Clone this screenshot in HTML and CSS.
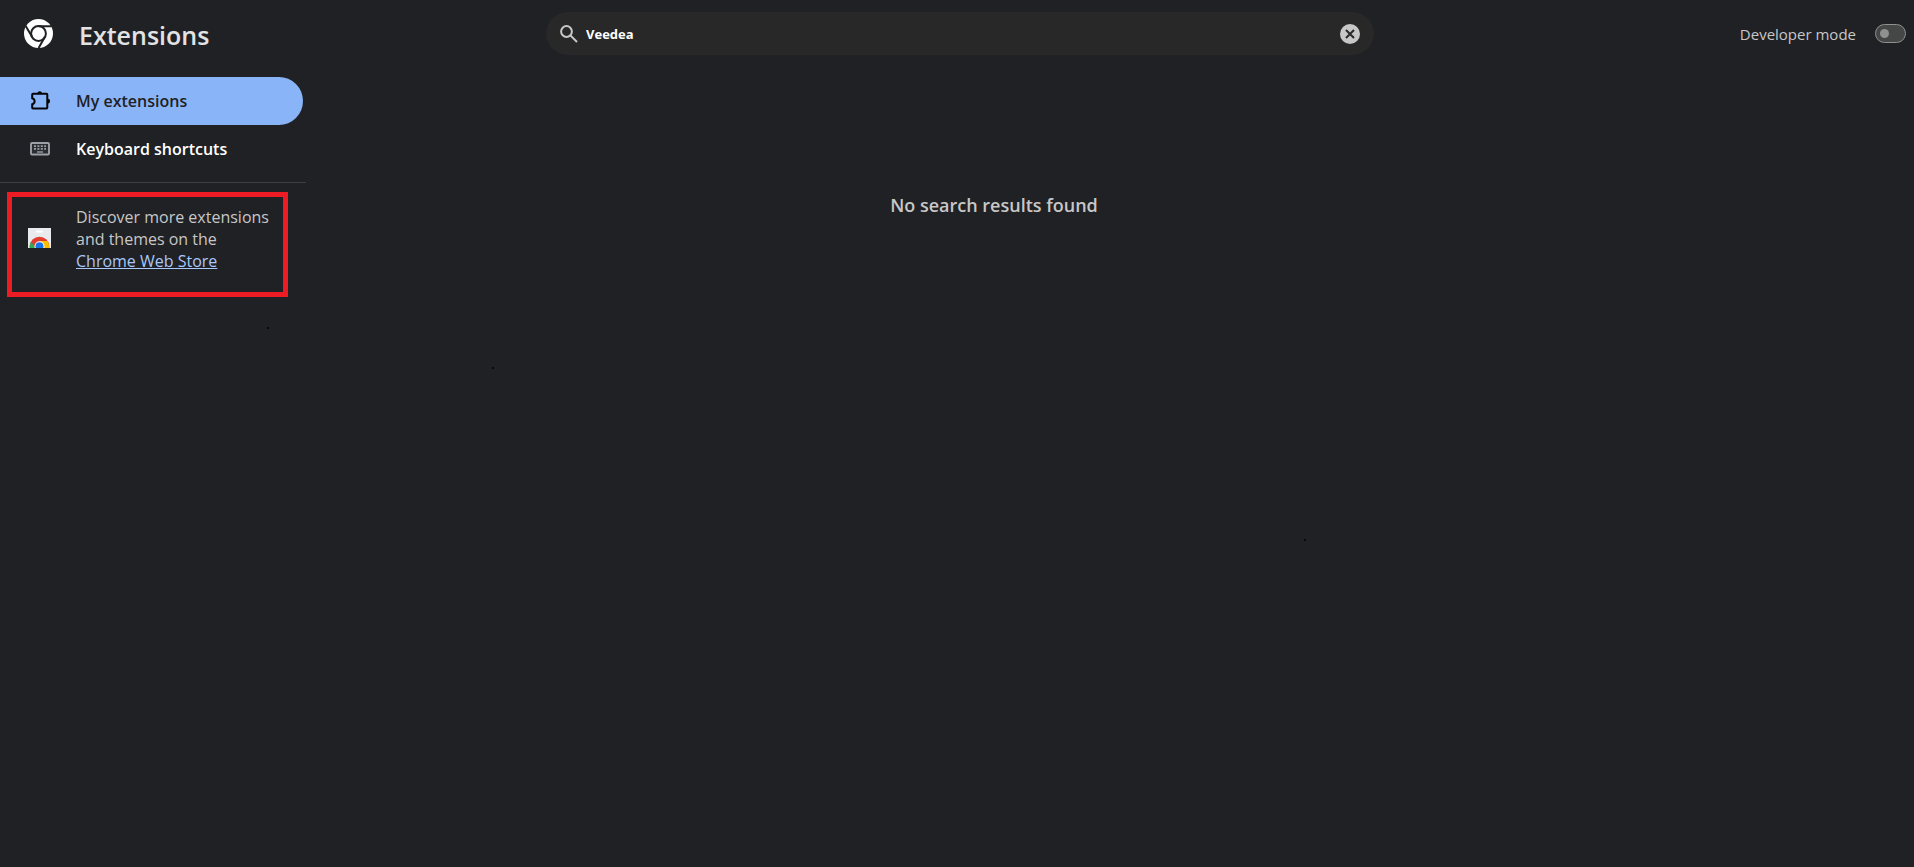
FILE: index.html
```html
<!DOCTYPE html>
<html lang="en">
<head>
<meta charset="utf-8">
<title>Extensions</title>
<link rel="stylesheet" href="styles.css">
</head>
<body>
<header class="toolbar">
  <div class="brand">
    <svg class="logo" viewBox="0 0 29 29" aria-hidden="true">
      <circle cx="14.5" cy="14.5" r="14.5" fill="#fff"/>
      <circle cx="14.5" cy="14.5" r="7.4" fill="none" stroke="#202124" stroke-width="2"/>
      <path d="M14.5 7.2H27.4M8.2 18.1L1.7 7M20.8 18.1L14.6 29" fill="none" stroke="#202124" stroke-width="2"/>
    </svg>
    <h1 class="title">Extensions</h1>
  </div>
  <div class="search">
    <svg class="search-icon" viewBox="0 0 18 18" aria-hidden="true"><circle cx="6.5" cy="6.5" r="5.4"/><path d="M10.5 10.5L17 17"/></svg>
    <input class="search-input" type="text" value="Veedea" aria-label="Search extensions">
    <button class="clear" type="button" aria-label="Clear search">
      <svg viewBox="0 0 20 20"><circle cx="10" cy="10" r="10" fill="#c7c7c7"/><path d="M6 6l8 8M14 6l-8 8" stroke="#282828" stroke-width="2"/></svg>
    </button>
  </div>
  <div class="dev">
    <label for="dev-mode">Developer mode</label>
    <input id="dev-mode" class="toggle" type="checkbox" role="switch">
  </div>
</header>
<div class="layout">
  <aside class="sidebar">
    <nav class="menu">
      <a class="item active" href="#extensions">
        <svg class="icon" viewBox="0 0 20 20" aria-hidden="true"><path d="M3 2.8H16.5Q17.3 2.8 17.3 3.6V16.7Q17.3 17.5 16.5 17.5H3Q2.2 17.5 2.2 16.7V13.2Q4.6 12.6 4.6 10.2T2.2 7.2V3.6Q2.2 2.8 3 2.8Z" fill="none" stroke="#050505" stroke-width="2"/><path d="M7.4 3a2.3 2.8 0 0 1 4.6 0zM17.4 7.8a2.6 2.4 0 0 1 0 4.8z" fill="#050505"/></svg>
        <span>My extensions</span>
      </a>
      <a class="item" href="#shortcuts">
        <svg class="icon" viewBox="0 0 20 20" aria-hidden="true"><rect x="1" y="4" width="18" height="11.5" rx="1" fill="#2b2d31" stroke="#9aa0a6" stroke-width="1.9"/><path d="M4 7.2h12M4 9.9h12" stroke="#9aa0a6" stroke-width="1.8" stroke-dasharray="2 1.4"/><path d="M7 13h6" stroke="#9aa0a6" stroke-width="1.4"/></svg>
        <span>Keyboard shortcuts</span>
      </a>
    </nav>
    <div class="promo">
      <svg class="store" viewBox="0 0 23 20" aria-hidden="true">
        <path d="M0 0h23v20H0z" fill="#e8eaed"/><rect x="8" y="2.5" width="7" height="2" rx="1" fill="#fff"/>
        <circle cx="11.5" cy="18.5" r="9.8" fill="#e33b2e"/>
        <path d="M3 13.5L8 20H1.8Q1.4 16.5 3 13.5Z" fill="#34a853"/>
        <path d="M11.5 13H19.6Q21.6 16 21.2 20H12Z" fill="#fbbc04"/>
        <circle cx="11.5" cy="18.3" r="5" fill="#fff"/><circle cx="11.5" cy="18.3" r="4" fill="#1a73e8"/>
      </svg>
      <p class="promo-text">Discover more extensions and themes on the <a href="#store">Chrome Web Store</a></p>
    </div>
  </aside>
  <main class="results"><p class="empty">No search results found</p></main>
</div>
<i class="speck speck-a"></i><i class="speck speck-b"></i><i class="speck speck-c"></i>
</body>
</html>
```
FILE: styles.css
```css
* { box-sizing: border-box; }
body {
  position: relative;
  margin: 0;
  min-height: 100vh;
  background: #202124;
  color: #c7c7c7;
  font: 16px/22px "Open Sans", "Segoe UI", sans-serif;
}
h1, p { margin: 0; }
.toolbar {
  display: grid;
  grid-template-columns: 1fr minmax(300px, 828px) 1fr;
  align-items: center;
  height: 67px;
  padding-left: 6px;
}
.brand { display: flex; align-items: center; gap: 26px; padding-left: 18px; }
.logo { width: 29px; height: 29px; }
.title { padding-top: 2px; font-size: 25px; line-height: 36px; font-weight: 600; color: #e3e3e3; }
.search {
  display: flex;
  align-items: center;
  gap: 8px;
  height: 43px;
  padding: 0 14px;
  border-radius: 22px;
  background: #282828;
}
.search-icon { width: 18px; height: 18px; fill: none; stroke: #c7c7c7; stroke-width: 2; }
.search-input {
  flex: 1;
  min-width: 0;
  padding: 0;
  border: 0;
  outline: 0;
  background: none;
  color: #fff;
  font: 700 13px/20px "Open Sans", "Segoe UI", sans-serif;
}
.clear { width: 20px; height: 20px; padding: 0; border: 0; background: none; }
.clear svg { display: block; }
.dev {
  display: flex;
  align-items: center;
  justify-content: flex-end;
  gap: 19px;
  padding-right: 8px;
  font-size: 15px;
}
.toggle {
  appearance: none;
  width: 31px;
  height: 19px;
  margin: 0;
  padding: 4px;
  border: 1px solid #8e918f;
  border-radius: 10px;
  background: #444746;
}
.toggle::before {
  content: "";
  display: block;
  width: 9px;
  height: 9px;
  border-radius: 50%;
  background: #8e918f;
}
.toggle:checked::before { margin-left: auto; }
.layout { display: flex; }
.sidebar { width: 306px; }
.menu { padding: 10px 3px 9px 0; border-bottom: 1px solid #3c4043; }
.item {
  display: flex;
  align-items: center;
  gap: 26px;
  height: 48px;
  padding-left: 30px;
  border-radius: 0 24px 24px 0;
  color: #fff;
  font-weight: 600;
  text-decoration: none;
}
.active { background: #8ab4f8; color: #202124; }
.icon { width: 20px; height: 20px; }
.promo {
  display: flex;
  align-items: flex-start;
  gap: 25px;
  margin: 9px 18px 0 7px;
  padding: 9px 8px 20px 16px;
  border: 5px solid #ed1c24;
}
.store { flex: none; width: 23px; height: 20px; margin-top: 22px; }
.promo-text a { color: #a8c7fa; }
.results { flex: 1; padding: 126px 232px 0 0; text-align: center; }
.empty { font-size: 18px; line-height: 24px; font-weight: 600; }
.speck { position: absolute; width: 2px; height: 2px; background: #08080a; }
.speck-a { left: 267px; top: 327px; }
.speck-b { left: 492px; top: 367px; }
.speck-c { left: 1304px; top: 539px; }
```
